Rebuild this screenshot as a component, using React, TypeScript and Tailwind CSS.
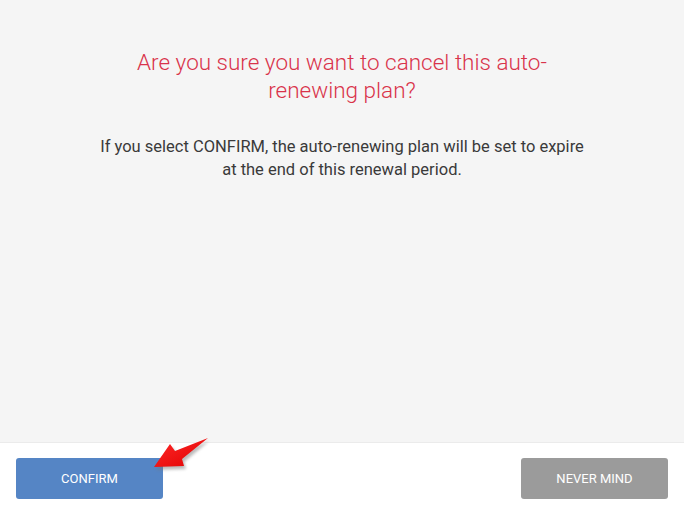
import React from "react";

export default function App() {
  return (
    <div className="relative w-[684px] h-[512px] bg-white flex flex-col overflow-hidden" style={{ fontFamily: "Roboto, 'Liberation Sans', sans-serif" }}>
      <div className="h-[443px] bg-[#f5f5f5] border-b border-[#ebebeb] flex flex-col items-center pt-[48px]">
        <h1 className="text-[22.5px] leading-[28px] font-light text-[#d9334a] text-center">
          Are you sure you want to cancel this auto-
          <br />
          renewing plan?
        </h1>
        <p className="mt-[31px] text-[16.5px] leading-[23px] text-[#3a3a3a] text-center">
          If you select CONFIRM, the auto-renewing plan will be set to expire
          <br />
          at the end of this renewal period.
        </p>
      </div>
      <div className="flex justify-between px-[16px] pt-[15px]">
        <button className="w-[147px] h-[41px] rounded-[3px] bg-[#5585c5] text-white text-[13px] uppercase">
          Confirm
        </button>
        <button className="w-[147px] h-[41px] rounded-[3px] bg-[#9b9b9b] text-white text-[13px] uppercase">
          Never Mind
        </button>
      </div>
      <svg
        className="absolute left-[148px] top-[432px]"
        width="66"
        height="42"
        viewBox="148 432 66 42"
      >
        <defs>
          <filter id="blur" x="-20%" y="-20%" width="140%" height="140%">
            <feGaussianBlur stdDeviation="1.5" />
          </filter>
          <linearGradient id="rg" x1="0" y1="0" x2="1" y2="1">
            <stop offset="0" stopColor="#ff2a2a" />
            <stop offset="1" stopColor="#e00000" />
          </linearGradient>
        </defs>
        <polygon
          points="156,470 172,447 177,454 209,441 184,462 186,469"
          fill="#777"
          opacity="0.5"
          filter="url(#blur)"
        />
        <polygon
          points="154,467 170,444 175,451 208,438 182,459 184,466"
          fill="url(#rg)"
        />
      </svg>
    </div>
  );
}
